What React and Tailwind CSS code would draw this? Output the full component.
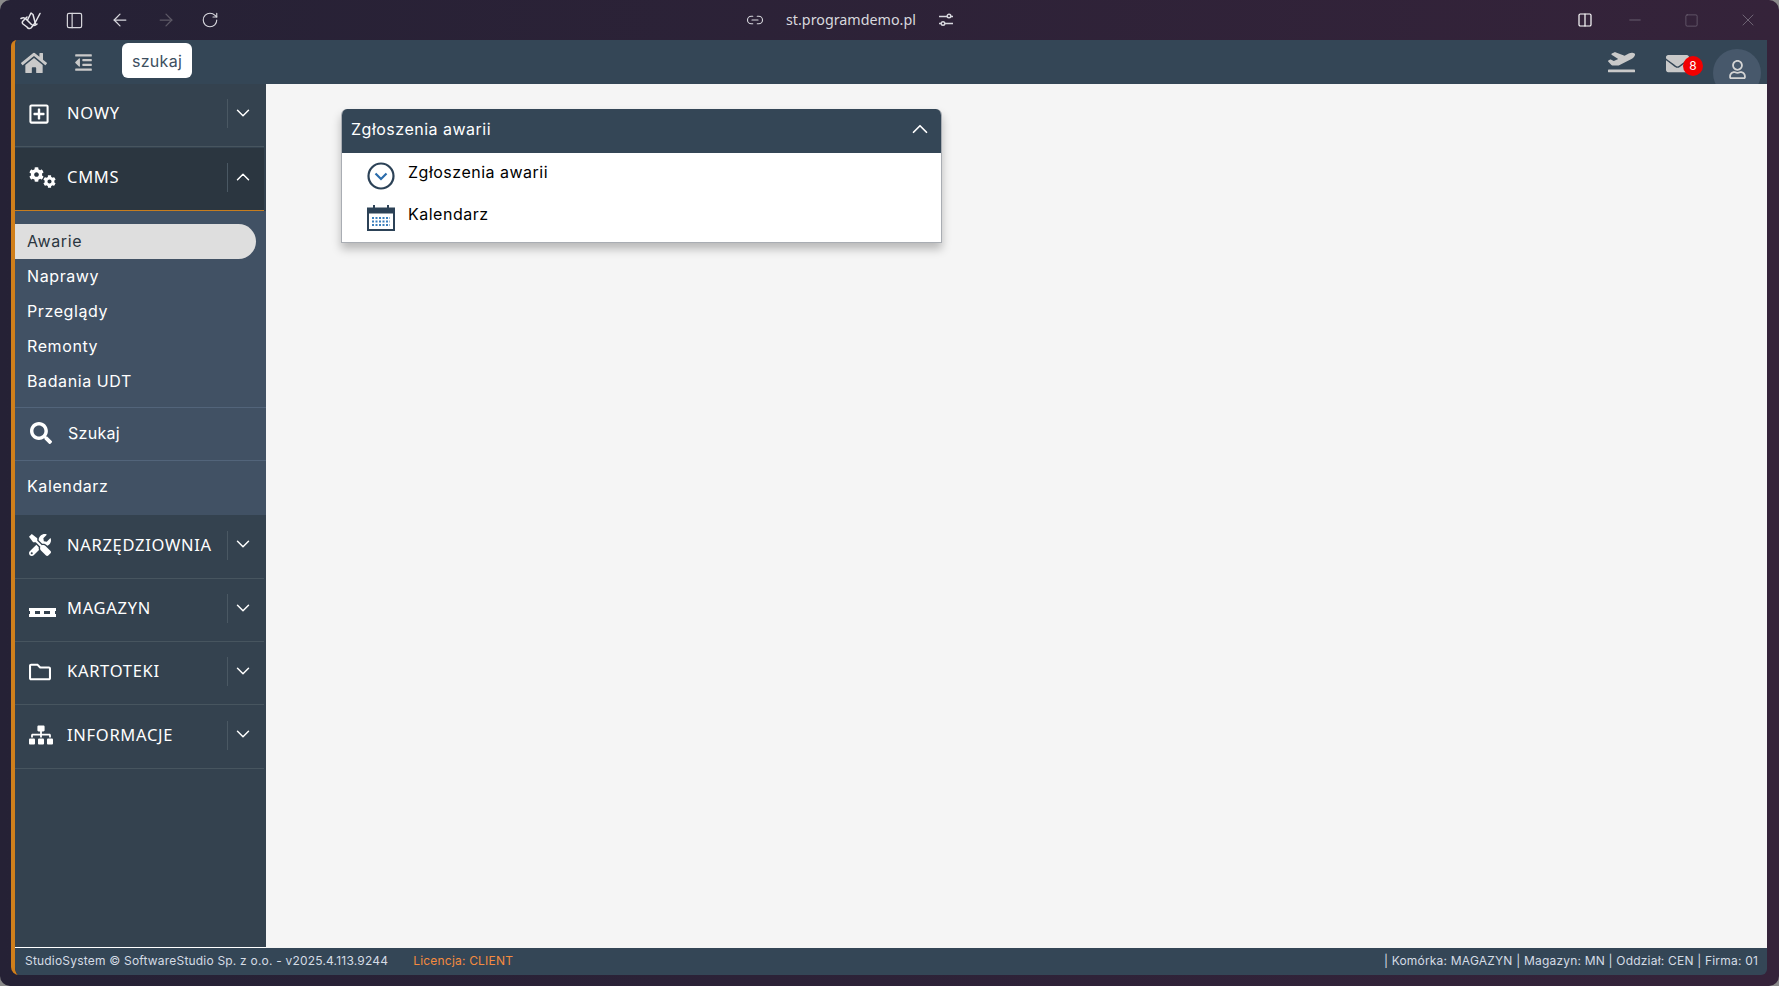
import React from 'react';
import {
  ArrowLeft,
  ArrowRight,
  ChevronDown,
  ChevronUp,
  Columns2,
  Link2,
  Minus,
  PanelLeft,
  RotateCw,
  Square,
  X,
} from 'lucide-react';
import {
  FaCog,
  FaEnvelope,
  FaHome,
  FaOutdent,
  FaPlaneDeparture,
  FaRegFolder,
  FaRegPlusSquare,
  FaRegUser,
  FaSearch,
  FaSitemap,
  FaTools,
} from 'react-icons/fa';

const BrowserLogo = () => (
  <svg width="21" height="19" viewBox="0 0 21 19" fill="none" stroke="#e6e6ea" strokeWidth="1.500" strokeLinejoin="round" strokeLinecap="round">
    <path d="M1 7.500c2.500-1.500 4.500-.5 6 1.500l4.500 4.500c2 1.500 4 1 5.500-.5" />
    <path d="M7.500 9 11 2l2 1.500 2.500 9.500" />
    <path d="M20 2.500 15 12l-4 5c-1.500 1-3 .5-4-1L3 13c-1-1-1-2 0-3l4-4" />
  </svg>
);

const SlidersIcon = () => (
  <svg width="16" height="14" viewBox="0 0 16 14" fill="none" stroke="currentColor" strokeWidth="1.400" className="ml-[22px]">
    <path d="M1 3.500h8M13 3.500h2M1 10.500h2M7 10.500h8" />
    <circle cx="11" cy="3" r="1.800" />
    <circle cx="5" cy="10.500" r="1.800" />
  </svg>
);

// ikona paleta z menu magazynu
const PalletIcon = () => (
  <svg width="27" height="9" viewBox="0 0 27 9" fill="#fff">
    <rect x="0" y="0" width="27" height="3" />
    <rect x="0" y="6" width="27" height="3" />
    <rect x="1" y="2" width="5" height="5" />
    <rect x="11" y="2" width="4" height="5" />
    <rect x="21" y="2" width="5" height="5" />
  </svg>
);

const CogsIcon = () => (
  <span className="flex items-start">
    <FaCog size={15} color="#fff" />
    <FaCog size={13} color="#fff" className="-ml-[1px] mt-[8px]" />
  </span>
);

const CircleDownIcon = () => (
  <svg width="28" height="28" viewBox="0 0 28 28" fill="none">
    <circle cx="14" cy="14" r="12.500" stroke="#2c4257" strokeWidth="2.200" />
    <path d="M8.500 11.500 14 17l5.500-5.500" stroke="#2b6cab" strokeWidth="2.200" />
  </svg>
);

const CalendarIcon = () => (
  <svg width="28" height="26" viewBox="0 0 28 26" fill="none">
    <rect x="1" y="3.500" width="26" height="21.500" fill="#fff" stroke="#2c4257" strokeWidth="2" />
    <rect x="1" y="3.500" width="26" height="5" fill="#2c4257" />
    <rect x="6" y="0" width="2" height="6" fill="#2c4257" />
    <rect x="20" y="0" width="2" height="6" fill="#2c4257" />
    <path d="M5 13h18M5 16.500h18M5 20h18" stroke="#3b7fbd" strokeWidth="2" strokeDasharray="2 1.500" />
  </svg>
);

const MenuRow = ({ icon, label, open, tall }) => (
  <div
    className={`flex w-[249px] items-center border-b pb-[3px] font-['Noto_Sans',sans-serif] text-[16.500px] tracking-[0.7px] text-white ${
      tall ? 'h-[64px]' : 'h-[63px]'
    } ${open ? 'border-[#c77d1f] bg-[#2b3640]' : 'border-[#47555f]'}`}
  >
    <div className="flex w-[52px] shrink-0 justify-start pl-[14px]">{icon}</div>
    <span className="flex-1">{label}</span>
    <div className="flex h-[29px] w-[37px] items-center justify-center border-l border-[#4a5863] pb-[2px] pr-[6px]">
      {open ? <ChevronUp size={22} strokeWidth={1.6} /> : <ChevronDown size={22} strokeWidth={1.6} />}
    </div>
  </div>
);

const SubItem = ({ label, active }) => (
  <div
    className={`flex h-[35px] w-[241px] items-center rounded-r-full pb-[2px] pl-[12px] text-[16px] tracking-[0.6px] ${
      active ? 'bg-[#dedede] text-[#2b3640]' : 'text-white'
    }`}
  >
    {label}
  </div>
);

const App = () => {
  return (
    <div className="h-screen w-full overflow-hidden bg-[#8a8a8a] font-[Inter,sans-serif]">
      <div className="flex h-full flex-col rounded-[10px] bg-gradient-to-r from-[#252135] to-[#35233a] pb-[11px] pl-[11px] pr-[12px]">
        {/* pasek przegladarki */}
        <div className="-ml-[11px] -mr-[12px] flex h-[40px] shrink-0 items-center text-[#d8d8de]">
          <div className="flex w-[746px] items-center pl-[20px]">
            <BrowserLogo />
            <PanelLeft size={19} strokeWidth={1.5} className="ml-[24px]" />
            <ArrowLeft size={20} strokeWidth={1.5} className="ml-[26px]" />
            <ArrowRight size={20} strokeWidth={1.5} className="ml-[26px] text-[#5d5966]" />
            <RotateCw size={18} strokeWidth={1.5} className="ml-[25px]" />
          </div>
          <Link2 size={18} strokeWidth={1.5} />
          <span className="ml-[22px] font-['Noto_Sans',sans-serif] text-[14.300px]">st.programdemo.pl</span>
          <SlidersIcon />
          <div className="ml-auto flex items-center pr-[21px]">
            <Columns2 size={16} strokeWidth={1.8} className="text-white" />
            <Minus size={18} strokeWidth={1} className="ml-[33px] text-[#7a7080]" />
            <Square size={15} strokeWidth={1} className="ml-[40px] text-[#7a7080]" />
            <X size={20} strokeWidth={1} className="ml-[39px] text-[#7a7080]" />
          </div>
        </div>

        <div className="flex min-h-0 flex-1 flex-col overflow-hidden rounded-bl-[8px] rounded-br-[6px] rounded-tl-[6px] border-l-4 border-[#d07f1b]">
          {/* gorny pasek aplikacji */}
          <div className="flex h-[44px] shrink-0 items-start overflow-hidden bg-[#344656]">
            <FaHome size={26} className="ml-[6px] mt-[10px] text-[#c9c9c9]" />
            <FaOutdent size={19} className="ml-[27px] mt-[13px] text-[#c9c9c9]" />
            <div className="ml-[29px] mt-[3px] flex h-[35px] w-[70px] items-center justify-center rounded-[6px] bg-white text-[16px] tracking-[0.3px] text-[#3d4f60]">
              szukaj
            </div>
            <div className="ml-auto flex items-start">
              <FaPlaneDeparture size={27} className="mt-[8px] text-[#c9c9c9]" />
              <div className="relative ml-[31px] mt-[12px]">
                <FaEnvelope size={23} className="text-[#c9c9c9]" />
                <span className="absolute left-[17px] top-[4px] flex h-[20px] w-[20px] items-center justify-center rounded-full bg-[#f20000] text-[12px] text-white">
                  8
                </span>
              </div>
              <div className="ml-[24px] mr-[6px] mt-[9px] flex h-[48px] w-[48px] justify-center rounded-full bg-[#47586b] pt-[11px]">
                <FaRegUser size={19} className="text-[#d4d4d4]" />
              </div>
            </div>
          </div>

          <div className="flex min-h-0 flex-1">
            {/* menu boczne */}
            <div className="flex w-[251px] shrink-0 flex-col border-b border-white bg-[#34424f]">
              <MenuRow label="NOWY" icon={<FaRegPlusSquare size={22} color="#fff" className="-ml-[1px]" />} />
              <div className="h-px bg-[#34424f]" />
              <MenuRow label="CMMS" open icon={<CogsIcon />} />
              <div className="h-[304px] bg-[#415164] pt-[13px]">
                <SubItem label="Awarie" active />
                <SubItem label="Naprawy" />
                <SubItem label="Przeglądy" />
                <SubItem label="Remonty" />
                <SubItem label="Badania UDT" />
                <div className="mt-[8px] flex h-[54px] items-center border-y border-[#52647a] pb-[2px] text-[16px] tracking-[0.3px] text-white">
                  <FaSearch size={22} className="ml-[15px]" />
                  <span className="ml-[16px]">Szukaj</span>
                </div>
                <div className="flex h-[50px] items-center pl-[12px] text-[16px] tracking-[0.6px] text-white">Kalendarz</div>
              </div>
              <MenuRow label="NARZĘDZIOWNIA" tall icon={<FaTools size={22} color="#fff" />} />
              <MenuRow label="MAGAZYN" icon={<span className="mt-[7px]"><PalletIcon /></span>} />
              <MenuRow label="KARTOTEKI" icon={<FaRegFolder size={22} color="#fff" />} />
              <MenuRow label="INFORMACJE" tall icon={<FaSitemap size={24} color="#fff" />} />
            </div>

            {/* tresc */}
            <div className="min-w-0 flex-1 bg-[#f5f5f5] pl-[75px] pt-[25px]">
              <div className="h-[134px] w-[601px] overflow-hidden rounded-t-[6px] border-x border-b border-[#a9adb3] bg-white shadow-[0_6px_10px_rgba(0,0,0,0.25)]">
                <div className="-mx-px flex h-[44px] items-center justify-between bg-[#344656] pb-[5px] pl-[10px] pr-[9px] text-[16px] tracking-[0.5px] text-white">
                  <span>Zgłoszenia awarii</span>
                  <ChevronUp size={26} strokeWidth={1.6} />
                </div>
                <div className="flex h-[42px] items-center pl-[25px] pt-[3px]">
                  <CircleDownIcon />
                  <span className="-mt-[8px] ml-[13px] text-[16px] tracking-[0.5px] text-black">Zgłoszenia awarii</span>
                </div>
                <div className="flex h-[46px] items-center pl-[25px]">
                  <CalendarIcon />
                  <span className="-mt-[8px] ml-[13px] text-[16px] tracking-[0.5px] text-black">Kalendarz</span>
                </div>
              </div>
            </div>
          </div>

          {/* stopka */}
          <div className="flex h-[27px] shrink-0 items-center justify-between bg-[#344656] pb-[2px] pl-[10px] pr-[9px] text-[12px] tracking-[0.2px] text-[#d5dce5]">
            <div className="flex">
              <span>StudioSystem © SoftwareStudio Sp. z o.o. - v2025.4.113.9244</span>
              <span className="ml-[25px] text-[#f58b3f]">Licencja: CLIENT</span>
            </div>
            <span>| Komórka: MAGAZYN | Magazyn: MN | Oddział: CEN | Firma: 01</span>
          </div>
        </div>
      </div>
    </div>
  );
};

export default App;
